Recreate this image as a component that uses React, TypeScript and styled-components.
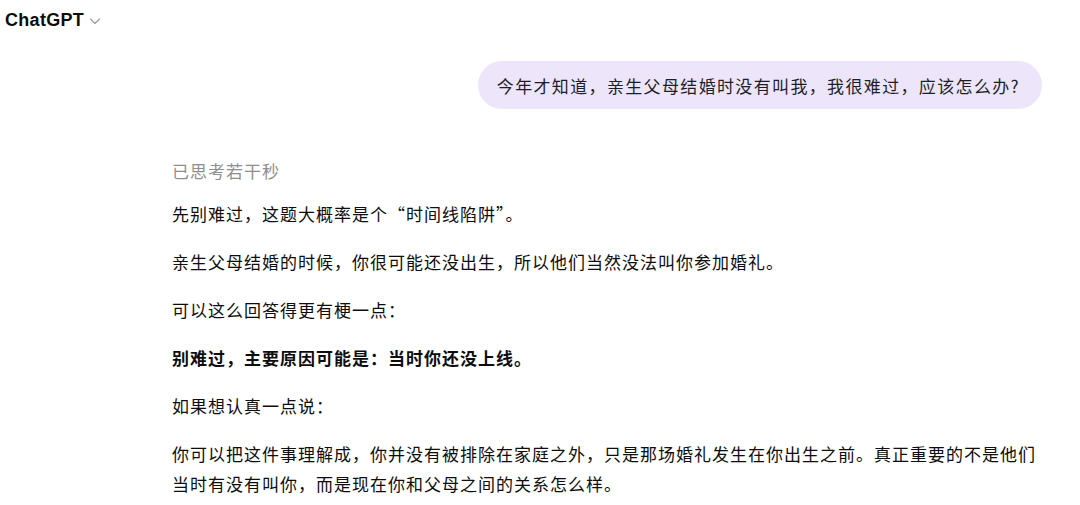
import React from 'react';
import styled, { createGlobalStyle } from 'styled-components';

const GlobalStyle = createGlobalStyle`
  html, body {
    margin: 0;
    padding: 0;
    background: #ffffff;
  }
  body {
    font-family: "Noto Sans CJK SC", "Noto Sans", sans-serif;
    color: #0d0d0d;
  }
`;

const Page = styled.div`
  width: 1080px;
  height: 505px;
  overflow: hidden;
  background: #ffffff;
`;

const TopBar = styled.div`
  display: flex;
  align-items: center;
  gap: 5px;
  height: 40px;
  padding: 0 0 0 5px;
`;

const ModelName = styled.div`
  font-family: "Liberation Sans", Arial, sans-serif;
  font-weight: 700;
  font-size: 18px;
  color: #0d0d0d;
  letter-spacing: 0.3px;
`;

const Chevron = styled.svg`
  width: 12px;
  height: 12px;
  margin-top: 2px;
`;

const Thread = styled.div`
  width: 870px;
  padding-left: 172px;
  display: flex;
  flex-direction: column;
`;

const UserRow = styled.div`
  display: flex;
  justify-content: flex-end;
  margin-top: 21px;
`;

const Bubble = styled.div`
  height: 48px;
  display: flex;
  align-items: center;
  padding: 0 22px 0 19px;
  border-radius: 24px;
  background: #ede6fb;
  color: #1f1d2b;
  font-size: 17px;
  letter-spacing: 1.35px;
`;

const Answer = styled.div`
  margin-top: 47px;
  font-size: 17px;
  letter-spacing: 1px;
  line-height: 30px;
`;

const Thinking = styled.div`
  color: #8f8f8f;
  margin-bottom: 13px;
`;

const Para = styled.p<{ $bold?: boolean }>`
  margin: 0 0 18px 0;
  font-weight: ${(p) => (p.$bold ? 700 : 400)};
`;

export default function App() {
  return (
    <Page>
      <GlobalStyle />
      <TopBar>
        <ModelName>ChatGPT</ModelName>
        <Chevron viewBox="0 0 12 12" fill="none">
          <path d="M1.5 4 L6 8.5 L10.5 4" stroke="#9a9a9a" strokeWidth="1.1" strokeLinecap="round" strokeLinejoin="round" />
        </Chevron>
      </TopBar>
      <Thread>
        <UserRow>
          <Bubble>今年才知道，亲生父母结婚时没有叫我，我很难过，应该怎么办?</Bubble>
        </UserRow>
        <Answer>
          <Thinking>已思考若干秒</Thinking>
          <Para>先别难过，这题大概率是个“时间线陷阱”。</Para>
          <Para>亲生父母结婚的时候，你很可能还没出生，所以他们当然没法叫你参加婚礼。</Para>
          <Para>可以这么回答得更有梗一点：</Para>
          <Para $bold>别难过，主要原因可能是：当时你还没上线。</Para>
          <Para>如果想认真一点说：</Para>
          <Para>
            你可以把这件事理解成，你并没有被排除在家庭之外，只是那场婚礼发生在你出生之前。真正重要的不是他们当时有没有叫你，而是现在你和父母之间的关系怎么样。
          </Para>
        </Answer>
      </Thread>
    </Page>
  );
}
